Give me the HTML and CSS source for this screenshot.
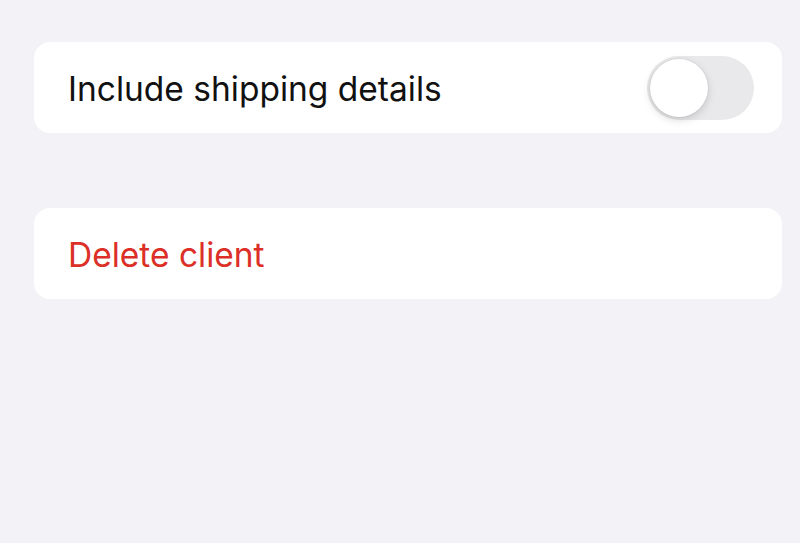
FILE: index.html
```html
<!DOCTYPE html>
<html>
<head>
<meta charset="utf-8">
<link rel="stylesheet" href="styles.css">
</head>
<body>
<main class="page">
  <section class="card row">
    <span class="label">Include shipping details</span>
    <span class="toggle" role="switch" aria-checked="false"><span class="knob"></span></span>
  </section>
  <section class="card row">
    <span class="label danger">Delete client</span>
  </section>
</main>
</body>
</html>
```
FILE: styles.css
```css
html, body {
  margin: 0;
  padding: 0;
  background: #f2f2f7;
  height: 100%;
}
.page {
  padding: 42px 18px 0 34px;
  display: flex;
  flex-direction: column;
  gap: 75px;
  font-family: Inter, "Noto Sans", sans-serif;
}
.card {
  background: #ffffff;
  border-radius: 16px;
  height: 91px;
  box-sizing: border-box;
}
.row {
  display: flex;
  align-items: center;
  justify-content: space-between;
  padding: 2px 28px 0 34px;
}
.label {
  font-size: 33.5px;
  color: #111111;
}
.danger {
  color: #dc2f27;
}
.toggle {
  width: 107px;
  height: 64px;
  border-radius: 32px;
  background: #e9e9eb;
  position: relative;
  display: block;
  margin-top: -2px;
}
.knob {
  position: absolute;
  left: 3px;
  top: 3px;
  width: 58px;
  height: 58px;
  border-radius: 50%;
  background: #fff;
  box-shadow: 0 3px 8px rgba(0,0,0,0.15), 0 0 0 1px rgba(0,0,0,0.04);
}
```
